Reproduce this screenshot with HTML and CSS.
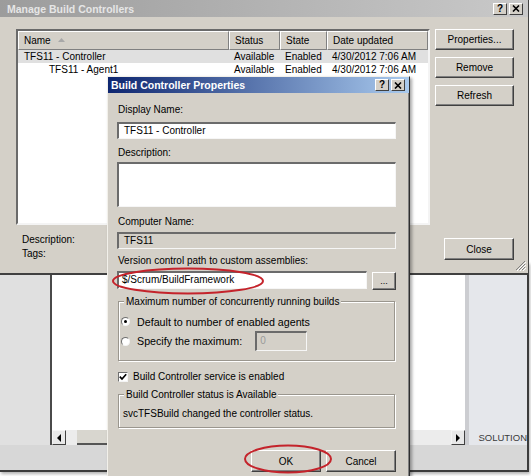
FILE: index.html
```html
<!DOCTYPE html>
<html lang="en">
<head>
    <meta charset="UTF-8">
    <title>Build Controller Properties</title>
    <link rel="stylesheet" href="styles.css">
</head>
<body>
    <div class="desktop">

        <!-- IDE window behind the dialogs -->
        <div class="ide">
            <div class="ide-main">
                <div class="ide-left"></div>
                <div class="ide-center">
                    <div class="ide-doc"></div>
                    <div class="hscroll">
                        <span class="scroll-btn">
                            <svg width="6" height="8" viewBox="0 0 6 8"><path d="M5 0 L1 4 L5 8 Z" fill="#000"/></svg>
                        </span>
                        <span class="scroll-track"><span class="scroll-thumb"></span></span>
                        <span class="scroll-btn">
                            <svg width="6" height="8" viewBox="0 0 6 8"><path d="M1 0 L5 4 L1 8 Z" fill="#000"/></svg>
                        </span>
                    </div>
                </div>
                <div class="ide-stripe"></div>
                <div class="ide-right">
                    <div class="ide-panel"></div>
                    <div class="ide-tab">SOLUTION</div>
                </div>
            </div>
            <div class="ide-status"></div>
        </div>

        <!-- Manage Build Controllers -->
        <div class="window manage">
            <div class="titlebar inactive">
                <span class="title">Manage Build Controllers</span>
                <span class="tb-buttons">
                    <span class="tb-btn">?</span>
                    <span class="tb-btn">
                        <svg width="8" height="7" viewBox="0 0 8 7"><path d="M1 0.5 L7 6.5 M7 0.5 L1 6.5" stroke="#000" stroke-width="1.6"/></svg>
                    </span>
                </span>
            </div>
            <div class="manage-body">
                <div class="manage-main">
                    <div class="listview">
                        <div class="lv-head">
                            <span>Name
                                <svg class="sort" width="7" height="4" viewBox="0 0 7 4"><path d="M0 4 L3.5 0 L7 4 Z" fill="#a8a8a8"/></svg>
                            </span>
                            <span>Status</span>
                            <span>State</span>
                            <span>Date updated</span>
                        </div>
                        <div class="lv-row selected">
                            <span>TFS11 - Controller</span>
                            <span>Available</span>
                            <span>Enabled</span>
                            <span>4/30/2012 7:06 AM</span>
                        </div>
                        <div class="lv-row">
                            <span class="child">TFS11 - Agent1</span>
                            <span>Available</span>
                            <span>Enabled</span>
                            <span>4/30/2012 7:06 AM</span>
                        </div>
                    </div>
                    <div class="info">
                        <div>Description:</div>
                        <div>Tags:</div>
                    </div>
                </div>
                <div class="manage-side">
                    <button class="btn">Properties...</button>
                    <button class="btn">Remove</button>
                    <button class="btn">Refresh</button>
                    <button class="btn close-btn">Close</button>
                </div>
            </div>
            <svg class="grip" width="11" height="11" viewBox="0 0 11 11">
                <path d="M10 1 L1 10 M10 4 L4 10 M10 7 L7 10" stroke="#808080" stroke-width="1"/>
                <path d="M11 2 L2 11 M11 5 L5 11 M11 8 L8 11" stroke="#fff" stroke-width="1"/>
            </svg>
        </div>

        <!-- Build Controller Properties -->
        <div class="window dialog">
            <div class="titlebar active">
                <span class="title">Build Controller Properties</span>
                <span class="tb-buttons">
                    <span class="tb-btn">?</span>
                    <span class="tb-btn">
                        <svg width="8" height="7" viewBox="0 0 8 7"><path d="M1 0.5 L7 6.5 M7 0.5 L1 6.5" stroke="#000" stroke-width="1.6"/></svg>
                    </span>
                </span>
            </div>
            <div class="dlg-body">
                <label class="lbl first">Display Name:</label>
                <div class="field name-field">TFS11 - Controller</div>

                <label class="lbl desc-lbl">Description:</label>
                <div class="field tall"></div>

                <label class="lbl comp-lbl">Computer Name:</label>
                <div class="field disabled">TFS11</div>

                <label class="lbl path-lbl">Version control path to custom assemblies:</label>
                <div class="path-row">
                    <div class="field path-field">$/Scrum/BuildFramework</div>
                    <button class="btn browse">...</button>
                </div>

                <fieldset class="group builds">
                    <legend>Maximum number of concurrently running builds</legend>
                    <div class="opt first-opt">
                        <span class="radio on"><span class="dot"></span></span>
                        <span>Default to number of enabled agents</span>
                    </div>
                    <div class="opt second-opt">
                        <span class="radio"></span>
                        <span>Specify the maximum:</span>
                        <div class="field disabled max-field">0</div>
                    </div>
                </fieldset>

                <div class="check-row">
                    <span class="check">
                        <svg width="8" height="8" viewBox="0 0 8 8"><path d="M0.8 3.6 L3 6 L7.2 1.2" fill="none" stroke="#000" stroke-width="1.7"/></svg>
                    </span>
                    <span>Build Controller service is enabled</span>
                </div>

                <fieldset class="group status">
                    <legend>Build Controller status is Available</legend>
                    <div class="status-text">svcTFSBuild changed the controller status.</div>
                </fieldset>

                <div class="dlg-buttons">
                    <button class="btn dlg-btn">OK</button>
                    <button class="btn dlg-btn">Cancel</button>
                </div>
            </div>
        </div>

        <!-- red call-out marks -->
        <svg class="mark mark-path" width="156" height="30" viewBox="0 0 156 30">
            <ellipse cx="78" cy="15" rx="75" ry="12.5" fill="none" stroke="#c4232b" stroke-width="2"/>
        </svg>
        <svg class="mark mark-ok" width="92" height="32" viewBox="0 0 92 32">
            <ellipse cx="46" cy="16" rx="43" ry="13.5" fill="none" stroke="#c4232b" stroke-width="2"/>
        </svg>
    </div>
</body>
</html>
```

FILE: styles.css
```css
body {
    margin: 0;
    background-color: #fff;
    font-family: "Liberation Sans", Arial, sans-serif;
    font-size: 10px;
    color: #000;
}
.desktop {
    position: relative;
    width: 531px;
    height: 476px;
    overflow: hidden;
}

/* ide behind */
.ide {
    position: absolute;
    left: 0;
    top: 262px;
    width: 529px;
    height: 210px;
    box-sizing: border-box;
    border-right: 2px solid #3c3c3c;
    border-bottom: 2px solid #3c3c3c;
    box-shadow: 1px 2px 3px rgba(0, 0, 0, 0.3);
    display: flex;
    flex-direction: column;
}
.ide-main {
    flex: 1;
    display: flex;
}
.ide-left {
    width: 51px;
    background-color: #e0e0e0;
    border-right: 2px solid #4a4a4a;
}
.ide-center {
    width: 418px;
    background-color: #fff;
    display: flex;
    flex-direction: column;
}
.ide-doc {
    flex: 1;
}
.hscroll {
    height: 15px;
    display: flex;
    background-color: #ececec;
}
.scroll-btn {
    width: 14px;
    box-sizing: border-box;
    display: flex;
    align-items: center;
    justify-content: center;
    border: 1px solid;
    border-color: #f4f4f4 #404040 #404040 #f4f4f4;
    background-color: #e8e8e8;
}
.scroll-track {
    flex: 1;
    display: flex;
}
.scroll-thumb {
    margin-left: 11px;
    width: 330px;
    background-color: #d8d6cf;
    border-bottom: 2px solid #555;
}
.ide-stripe {
    width: 4px;
    background-color: #cccdd1;
}
.ide-right {
    flex: 1;
    background-color: #e5e7eb;
    display: flex;
    flex-direction: column;
}
.ide-panel {
    flex: 1;
}
.ide-tab {
    height: 15px;
    line-height: 15px;
    padding-left: 9px;
    color: #3a3a3a;
    font-size: 9.5px;
    white-space: nowrap;
}
.ide-status {
    height: 25px;
    background-color: #d7d7d7;
}

/* windows */
.window {
    position: absolute;
    box-sizing: border-box;
    background-color: #d4d0c8;
}
.titlebar {
    display: flex;
    align-items: center;
    justify-content: space-between;
}
.titlebar .title {
    font-weight: bold;
    font-size: 10.5px;
    white-space: nowrap;
}
.titlebar.inactive {
    height: 17px;
    padding: 0 5px 0 7px;
    background: linear-gradient(to right, #9c9c9c, #c9c9c9);
    color: #e6e6e6;
}
.titlebar.active {
    height: 16px;
    padding: 0 4px 0 3px;
    background: linear-gradient(to right, #0e2670, #a9caee);
    color: #fff;
}
.tb-buttons {
    display: flex;
    gap: 2px;
}
.tb-btn {
    width: 14px;
    height: 12px;
    box-sizing: border-box;
    display: flex;
    align-items: center;
    justify-content: center;
    background-color: #d4d0c8;
    border: 1px solid;
    border-color: #fff #404040 #404040 #fff;
    color: #000;
    font-weight: bold;
    font-size: 10px;
    line-height: 10px;
}

.btn {
    box-sizing: border-box;
    background-color: #d4d0c8;
    border: 1px solid;
    border-color: #fff #404040 #404040 #fff;
    box-shadow: inset -1px -1px #808080;
    font: inherit;
    color: #000;
    padding: 0;
    display: flex;
    align-items: center;
    justify-content: center;
}

/* manage build controllers */
.manage {
    left: 0;
    top: 0;
    width: 529px;
    height: 275px;
    border-right: 1px solid #404040;
    border-bottom: 2px solid #404040;
    display: flex;
    flex-direction: column;
}
.manage-body {
    flex: 1;
    display: flex;
    gap: 5px;
    padding: 12px 14px 11px 16px;
}
.manage-main {
    width: 414px;
}
.listview {
    height: 196px;
    box-sizing: border-box;
    background-color: #fff;
    border: 2px solid;
    border-color: #6a6a6a #f4f4f4 #f4f4f4 #6a6a6a;
}
.lv-head,
.lv-row {
    display: grid;
    grid-template-columns: 211px 51px 47px 101px;
    white-space: nowrap;
}
.lv-head span {
    box-sizing: border-box;
    height: 19px;
    line-height: 17px;
    padding-left: 5px;
    background-color: #d4d0c8;
    border: 1px solid;
    border-color: #fff #808080 #808080 #fff;
}
.sort {
    margin-left: 5px;
    vertical-align: 2px;
}
.lv-row {
    line-height: 13px;
}
.lv-row span {
    padding-left: 5px;
}
.lv-row span:first-child {
    padding-left: 6px;
}
.lv-row span.child {
    padding-left: 31px;
}
.lv-row.selected {
    background-color: #e0e0e0;
}
.info {
    margin-top: 8px;
    padding-left: 6px;
    line-height: 14px;
}
.manage-side {
    width: 79px;
    display: flex;
    flex-direction: column;
    gap: 7px;
}
.manage-side .btn {
    height: 21px;
}
.manage-side .close-btn {
    margin-top: auto;
    margin-bottom: 2px;
    width: 70px;
    height: 22px;
    align-self: flex-end;
}
.grip {
    position: absolute;
    right: 2px;
    bottom: 2px;
}

/* build controller properties */
.dialog {
    left: 107px;
    top: 76px;
    width: 303px;
    height: 410px;
    border: 1px solid;
    border-color: #f2f0ea #2e2e2e #2e2e2e #f2f0ea;
    box-shadow: inset -1px 0 #808080, 2px 2px 3px rgba(0, 0, 0, 0.35);
}
.dlg-body {
    padding: 0 13px 0 9px;
}
.lbl {
    display: block;
    line-height: 13px;
    padding-left: 1px;
}
.lbl.first {
    margin-top: 10px;
}
.field {
    box-sizing: border-box;
    height: 17px;
    background-color: #fff;
    border-style: solid;
    border-width: 2px 1px 1px 2px;
    border-color: #6b6b6b #f6f6f6 #f6f6f6 #6b6b6b;
    padding-left: 5px;
    line-height: 13px;
    white-space: nowrap;
}
.name-field {
    margin-top: 6px;
}
.desc-lbl {
    margin-top: 7px;
}
.field.tall {
    margin-top: 3px;
    height: 45px;
}
.comp-lbl {
    margin-top: 8px;
}
.field.disabled {
    margin-top: 4px;
    background-color: #d4d0c8;
}
.path-lbl {
    margin-top: 5px;
}
.path-row {
    margin-top: 4px;
    display: flex;
    gap: 5px;
}
.path-field {
    width: 250px;
    height: 18px;
    padding-left: 3px;
}
.browse {
    width: 24px;
    height: 18px;
    margin-top: 1px;
    font-size: 9px;
    line-height: 10px;
}

.group {
    margin: 5px 1px 0;
    padding: 0 0 9px 2px;
    min-width: 0;
    border: 1px solid #9a968e;
    box-shadow: inset 1px 1px #fff, 1px 1px #fff;
}
.group legend {
    padding: 0 2px;
    margin-left: 3px;
    line-height: 13px;
    background-color: #d4d0c8;
}
.opt {
    display: flex;
    align-items: center;
    gap: 7px;
    font-size: 10.7px;
    white-space: nowrap;
}
.first-opt {
    margin-top: 7px;
    height: 13px;
}
.second-opt {
    margin-top: 3px;
    height: 20px;
}
.radio {
    width: 9px;
    height: 9px;
    box-sizing: border-box;
    border-radius: 50%;
    border: 1px solid;
    border-color: #707070 #f4f4f4 #f4f4f4 #707070;
    background-color: #fff;
    display: flex;
    align-items: center;
    justify-content: center;
}
.radio .dot {
    width: 3px;
    height: 3px;
    border-radius: 50%;
    background-color: #000;
}
.max-field.field.disabled {
    margin: 0 0 0 6px;
    width: 52px;
    height: 20px;
    color: #9a9a9a;
    padding-left: 3px;
    line-height: 16px;
    font-size: 10px;
}
.check-row {
    margin-top: 9px;
    display: flex;
    align-items: center;
    gap: 5px;
    line-height: 13px;
    padding-left: 1px;
}
.check {
    width: 10px;
    height: 10px;
    box-sizing: border-box;
    border: 1px solid;
    border-color: #707070 #f4f4f4 #f4f4f4 #707070;
    background-color: #fff;
    display: flex;
    align-items: center;
    justify-content: center;
}
.group.status {
    padding-bottom: 7px;
}
.status-text {
    margin-top: 6px;
    line-height: 13px;
    padding-left: 2px;
}
.dlg-buttons {
    margin-top: 22px;
    display: flex;
    justify-content: flex-end;
    gap: 5px;
}
.dlg-btn {
    width: 70px;
    height: 22px;
}

/* red call-outs drawn over the capture */
.mark {
    position: absolute;
}
.mark-path {
    left: 110px;
    top: 266px;
}
.mark-ok {
    left: 242px;
    top: 443px;
}
```
